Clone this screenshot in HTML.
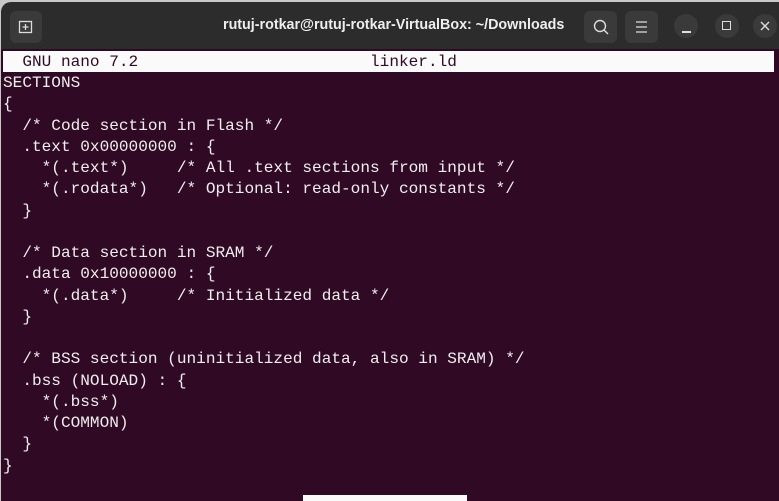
<!DOCTYPE html>
<html><head><style>
html,body{margin:0;width:779px;height:501px;overflow:hidden}
body{background:#c8c8c8;position:relative;font-family:"Liberation Sans",sans-serif}
.win{position:absolute;left:1px;top:2px;width:778px;height:499px;background:#2c2c2c;border-radius:10px 0 0 0;overflow:hidden}
.term{position:absolute;left:0;top:47px;right:0;bottom:0;background:#300a24}
.btn{position:absolute;background:#3a3a3a;border-radius:6px}
.circ{position:absolute;width:24px;height:24px;border-radius:50%;background:#3a3a3a}
pre{position:absolute;margin:0;left:2px;top:0;font-family:"Liberation Mono",monospace;font-size:16.1px;line-height:21.25px;color:#eeeeee;letter-spacing:0}
.hdr{position:absolute;left:2px;top:2px;width:771px;height:21px;background:#fafafa}
</style></head><body>
<div class="win">
 <div class="btn" style="left:9px;top:9px;width:32px;height:32px"></div>
 <svg style="position:absolute;left:17px;top:17px" width="16" height="16"><rect x="1.5" y="2.5" width="12" height="11" fill="none" stroke="#ddd" stroke-width="1.3"/><path d="M7.5 5v6M4.5 8h6" stroke="#ddd" stroke-width="1.3"/></svg>
 <div style="position:absolute;left:222px;top:15px;color:#eee;font-size:14.3px;font-weight:bold">rutuj-rotkar@rutuj-rotkar-VirtualBox: ~/Downloads</div>
 <div class="btn" style="left:583px;top:9px;width:33px;height:32px"></div>
 <svg style="position:absolute;left:591px;top:16px" width="18" height="18"><circle cx="8" cy="8" r="5.5" fill="none" stroke="#ddd" stroke-width="1.4"/><path d="M12 12l4 4" stroke="#ddd" stroke-width="1.4"/></svg>
 <div class="btn" style="left:624px;top:9px;width:33px;height:32px"></div>
 <svg style="position:absolute;left:634px;top:18px" width="14" height="14"><path d="M1 2h11M1 7h11M1 12h11" stroke="#ddd" stroke-width="1.3"/></svg>
 <div class="circ" style="left:673px;top:12px"></div>
 <div style="position:absolute;left:681px;top:29px;width:9px;height:1.5px;background:#ddd"></div>
 <div class="circ" style="left:714px;top:12px"></div>
 <div style="position:absolute;left:721px;top:19px;width:7px;height:7px;border:1.5px solid #ddd"></div>
 <div class="circ" style="left:752px;top:12px"></div>
 <svg style="position:absolute;left:759px;top:19px" width="10" height="10"><path d="M1 1l8 8M9 1l-8 8" stroke="#ddd" stroke-width="1.4"/></svg>
 <div class="term">
  <div class="hdr"></div>
  <pre style="top:3px;color:#300a24">  GNU nano 7.2                        linker.ld</pre>
  <pre style="top:24px">SECTIONS
{
  /* Code section in Flash */
  .text 0x00000000 : {
    *(.text*)     /* All .text sections from input */
    *(.rodata*)   /* Optional: read-only constants */
  }

  /* Data section in SRAM */
  .data 0x10000000 : {
    *(.data*)     /* Initialized data */
  }

  /* BSS section (uninitialized data, also in SRAM) */
  .bss (NOLOAD) : {
    *(.bss*)
    *(COMMON)
  }
}</pre>
  <div style="position:absolute;left:302px;top:446px;width:164px;height:20px;background:#fafafa"></div>
 </div>
</div>
</body></html>
